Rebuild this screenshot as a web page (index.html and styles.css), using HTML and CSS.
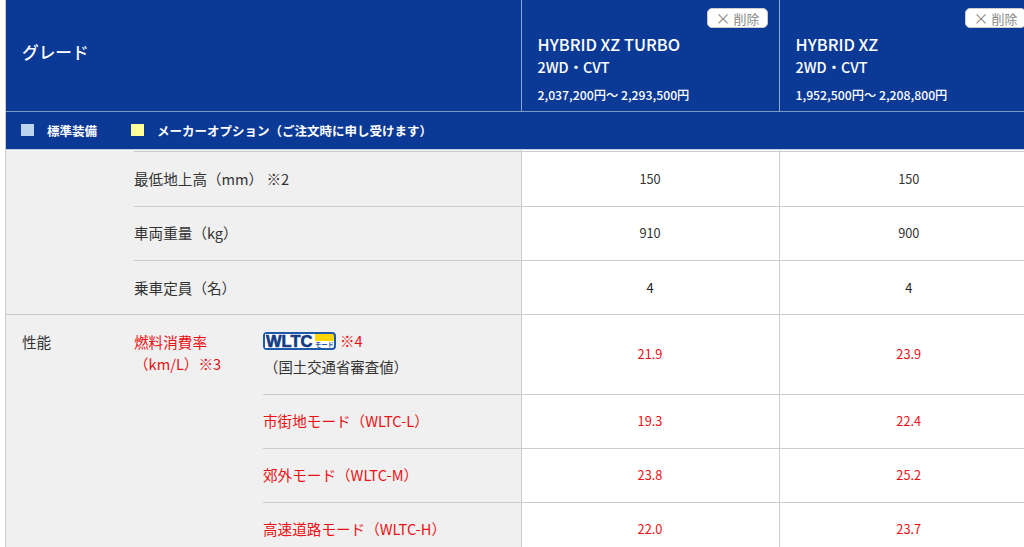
FILE: index.html
```html
<!DOCTYPE html>
<html lang="ja">
<head>
<meta charset="utf-8">
<title>グレード比較</title>
<link rel="stylesheet" href="styles.css">
</head>
<body>
<div class="page">
  <header class="head">
    <div class="grade-row">
      <div class="grade-label">グレード</div>
      <div class="grade">
        <button class="remove"><span class="x">×</span> 削除</button>
        <div class="name">HYBRID XZ TURBO</div>
        <div class="name sub">2WD・CVT</div>
        <div class="price">2,037,200円～ 2,293,500円</div>
      </div>
      <div class="grade">
        <button class="remove"><span class="x">×</span> 削除</button>
        <div class="name">HYBRID XZ</div>
        <div class="name sub">2WD・CVT</div>
        <div class="price">1,952,500円～ 2,208,800円</div>
      </div>
    </div>
    <div class="legend">
      <span class="swatch std"></span><span class="legend-text">標準装備</span>
      <span class="swatch opt"></span><span class="legend-text">メーカーオプション（ご注文時に申し受けます）</span>
    </div>
  </header>
  <table class="spec">
    <colgroup><col class="c1"><col class="c2"><col class="c3"><col class="c4"><col class="c5"></colgroup>
    <tbody>
      <tr class="sliver"><th class="nb"></th><th class="nb" colspan="2"></th><td class="nb"></td><td class="nb"></td></tr>
      <tr class="h55"><th class="nb"></th><th colspan="2">最低地上高（mm） ※2</th><td>150</td><td>150</td></tr>
      <tr class="h54"><th class="nb"></th><th colspan="2">車両重量（kg）</th><td>910</td><td>900</td></tr>
      <tr class="h54 nudge"><th class="nb"></th><th colspan="2">乗車定員（名）</th><td class="dark">4</td><td class="dark">4</td></tr>
      <tr class="h80">
        <th rowspan="4" class="top cat">性能</th>
        <th rowspan="4" class="top red fuel">燃料消費率<br><span class="unit">（km/L）※3</span></th>
        <th class="wltc-cell">
          <div class="wltc-line"><span class="wltc"><span class="wltc-w">WLTC</span><span class="wltc-m">モード</span></span><span class="red">※4</span></div>
          <div class="mlit">（国土交通省審査値）</div>
        </th>
        <td class="red">21.9</td><td class="red">23.9</td>
      </tr>
      <tr class="h54"><th class="red">市街地モード（WLTC-L）</th><td class="red">19.3</td><td class="red">22.4</td></tr>
      <tr class="h54"><th class="red">郊外モード（WLTC-M）</th><td class="red">23.8</td><td class="red">25.2</td></tr>
      <tr class="h54"><th class="red">高速道路モード（WLTC-H）</th><td class="red">22.0</td><td class="red">23.7</td></tr>
    </tbody>
  </table>
</div>
</body>
</html>
```
FILE: styles.css
```css
* { box-sizing: border-box; }
html, body { margin: 0; height: 100%; overflow: hidden; background: #fff; }
body { font-family: "Noto Sans CJK JP", "Noto Sans", sans-serif; color: #333; font-size: 14.6px; }
.page { width: 1034px; height: 547px; margin-left: 5px; border-left: 1px solid #ccc; overflow: hidden; }

.head { background: #0a3a96; color: #fff; }
.grade-row { display: flex; height: 112px; border-bottom: 1px solid #7f97c6; }
.grade-label { width: 515px; padding: 41px 0 0 16px; font-size: 16.7px; line-height: 22px; font-weight: 500; }
.grade { position: relative; width: 258px; padding: 33px 0 0 15.5px; border-left: 1px solid #8ea5cf; }
.name { font-size: 16.4px; line-height: 22px; font-weight: 500; }
.sub { font-size: 14.4px; line-height: 24px; }
.price { font-size: 12.25px; line-height: 16px; margin-top: 8px; font-weight: 500; }
.remove { position: absolute; top: 8px; right: 11px; width: 61px; height: 20px; padding: 0; background: #fff; border: 1px solid #ccc; border-radius: 5px; color: #888; font: 13px/18px "Noto Sans CJK JP", sans-serif; }
.x { font-size: 15px; }

.legend { display: flex; align-items: center; height: 38px; padding: 0 0 1px 15px; font-size: 12.5px; font-weight: 700; border-bottom: 1px solid #c3d1e8; }
.swatch { width: 13px; height: 12px; }
.std { background: #bdd4ee; }
.opt { background: #ffff99; }
.legend-text { margin-left: 13px; margin-right: 34px; }

.spec { border-collapse: collapse; table-layout: fixed; width: 1032px; }
.c1 { width: 128px; } .c2 { width: 129px; } .c3 { width: 258px; } .c4 { width: 258px; } .c5 { width: 259px; }
th, td { border-top: 1px solid #ccc; font-weight: 400; padding: 0 0 1px; }
th { background: #f0f0f0; text-align: left; vertical-align: middle; font-size: 14.6px; }
td { text-align: center; border-left: 1px solid #ccc; font-size: 12.75px; color: #333; background: #fff; }
.spec .nb { border-top: 0; }
.sliver { height: 1px; }
.sliver th, .sliver td { padding: 0; font-size: 0; line-height: 0; height: 1px; }
.h55 { height: 55px; } .h54 { height: 54px; } .h80 { height: 80px; }
.nudge th, .nudge td { padding: 1px 0 0; }
.top { vertical-align: top; }
.cat { padding: 16px 0 0 16px; }
.fuel { padding-top: 16px; line-height: 22px; }
.unit { display: inline-block; }
.dark { color: #222; }
.spec .red { color: #ea1015; }
.wltc-line { display: flex; align-items: center; height: 22px; margin-top: 1px; }
.wltc { display: inline-flex; align-items: flex-start; flex: none; width: 73px; height: 18px; border: 2px solid #1f5aa8; border-radius: 4px; background: linear-gradient(#ffd500 0 50%, #fff 50%); margin-right: 4px; }
.wltc-w { flex: none; font: 700 16.5px/14px "Liberation Sans", sans-serif; -webkit-text-stroke: 0.6px #123a85; color: #123a85; background: #fff; height: 14px; padding-left: 1px; width: 50px; }
.wltc-m { flex: none; width: 19px; font: 700 6.3px/7px "Noto Sans CJK JP", sans-serif; color: #1f5aa8; margin-top: 7px; white-space: nowrap; }
.mlit { font-size: 14.4px; line-height: 24px; margin-top: 3px; padding-left: 1px; }
```
